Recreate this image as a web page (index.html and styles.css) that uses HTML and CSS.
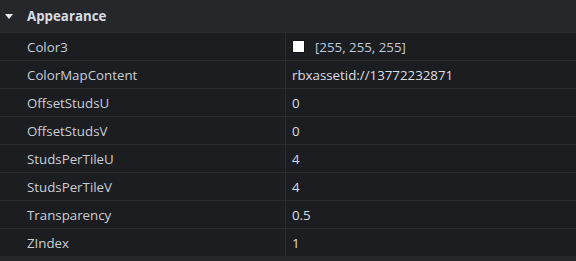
FILE: index.html
```html
<!DOCTYPE html>
<html lang="en">
<head>
  <meta charset="UTF-8">
  <title>Properties</title>
  <link rel="stylesheet" href="styles.css">
</head>
<body>
  <div class="panel">
    <div class="section-header">
      <span class="caret"></span>
      <span class="section-title">Appearance</span>
    </div>

    <div class="row">
      <div class="name">Color3</div>
      <div class="value"><span class="swatch"></span><span class="color-text">[255, 255, 255]</span></div>
    </div>
    <div class="row">
      <div class="name">ColorMapContent</div>
      <div class="value">rbxassetid://13772232871</div>
    </div>
    <div class="row">
      <div class="name">OffsetStudsU</div>
      <div class="value">0</div>
    </div>
    <div class="row">
      <div class="name">OffsetStudsV</div>
      <div class="value">0</div>
    </div>
    <div class="row">
      <div class="name">StudsPerTileU</div>
      <div class="value">4</div>
    </div>
    <div class="row">
      <div class="name">StudsPerTileV</div>
      <div class="value">4</div>
    </div>
    <div class="row">
      <div class="name">Transparency</div>
      <div class="value">0.5</div>
    </div>
    <div class="row">
      <div class="name">ZIndex</div>
      <div class="value">1</div>
    </div>
  </div>
</body>
</html>
```

FILE: styles.css
```css
body {
  margin: 0;
  background-color: #26272b;
  font-family: 'Open Sans', 'Noto Sans', sans-serif;
  font-size: 13.3px;
  color: #cfd3d9;
}

.panel {
  height: 256px;
  background-color: #1c1d21;
}

.section-header {
  display: flex;
  align-items: center;
  height: 32px;
  background-color: #26272b;
}

.caret {
  width: 0;
  height: 0;
  margin-left: 5px;
  border-left: 4px solid transparent;
  border-right: 4px solid transparent;
  border-top: 5px solid #e8eaed;
}

.section-title {
  margin-left: 14px;
  font-weight: bold;
  color: #d9dde3;
}

.row {
  display: grid;
  grid-template-columns: 286px 1fr;
  height: 28px;
  border-top: 1px solid #2a2b30;
  box-sizing: border-box;
}

.name {
  display: flex;
  align-items: center;
  padding-left: 27px;
  border-right: 1px solid #2a2b30;
  color: #c9ced6;
}

.value {
  display: flex;
  align-items: center;
  padding-left: 6px;
  color: #dcdfe3;
}

.swatch {
  width: 11px;
  height: 11px;
  background-color: #fff;
  border: 1px solid #111;
  margin-right: 10px;
}

.color-text {
  color: #bfcadb;
}
```
